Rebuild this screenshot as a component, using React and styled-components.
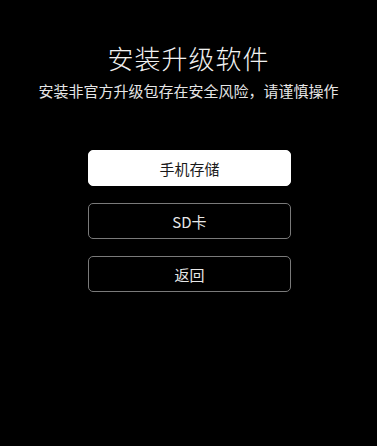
import React from "react";
import styled, { createGlobalStyle } from "styled-components";

const GlobalStyle = createGlobalStyle`
  html, body {
    margin: 0;
    padding: 0;
    background: #000;
  }
  body {
    font-family: "Noto Sans CJK SC", "Noto Sans", sans-serif;
  }
`;

const Screen = styled.div`
  width: 377px;
  height: 446px;
  background: #000;
  display: flex;
  flex-direction: column;
  align-items: center;
  padding-top: 42px;
  box-sizing: border-box;
`;

const Title = styled.div`
  color: #f2f2f2;
  font-size: 26px;
  font-weight: 300;
  line-height: 32px;
  letter-spacing: 1px;
`;

const Subtitle = styled.div`
  color: #e6e6e6;
  font-size: 15px;
  line-height: 20px;
  margin-top: 7px;
`;

const Buttons = styled.div`
  display: flex;
  flex-direction: column;
  gap: 17px;
  margin-top: 49px;
  margin-left: 2px;
`;

const Button = styled.div`
  width: 203px;
  height: 36px;
  box-sizing: border-box;
  border-radius: 5px;
  border: 1px solid ${p => (p.$primary ? "#fff" : "#7a7a7a")};
  background: ${p => (p.$primary ? "#fff" : "#000")};
  color: ${p => (p.$primary ? "#1a1a1a" : "#e8e8e8")};
  font-size: 15px;
  display: flex;
  align-items: center;
  justify-content: center;
`;

export default function App() {
  return (
    <>
      <GlobalStyle />
      <Screen>
        <Title>安装升级软件</Title>
        <Subtitle>安装非官方升级包存在安全风险，请谨慎操作</Subtitle>
        <Buttons>
          <Button $primary>手机存储</Button>
          <Button>SD卡</Button>
          <Button>返回</Button>
        </Buttons>
      </Screen>
    </>
  );
}
